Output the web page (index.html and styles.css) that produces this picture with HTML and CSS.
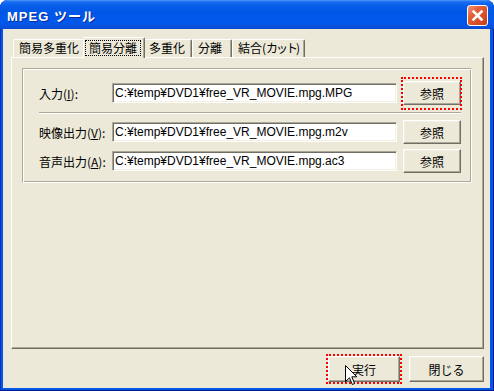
FILE: index.html
```html
<!DOCTYPE html>
<html lang="ja">
<head>
    <meta charset="UTF-8">
    <title>MPEG ツール</title>
    <link rel="stylesheet" href="styles.css">
</head>
<body>
    <div class="window">
        <div class="titlebar">
            <span class="title">MPEG ツール</span>
            <span class="close">
                <svg width="19" height="19" viewBox="0 0 19 19"><path d="M5.5 5.5 L13.5 13.5 M13.5 5.5 L5.5 13.5" stroke="#fff" stroke-width="2.6" stroke-linecap="square"/></svg>
            </span>
        </div>
        <div class="client">
            <div class="tabs">
                <div class="tab t1">簡易多重化</div>
                <div class="tab t2 active"><span class="focus">簡易分離</span></div>
                <div class="tab t3">多重化</div>
                <div class="tab t4">分離</div>
                <div class="tab t5">結合(<span class="narrow">カット</span>)</div>
            </div>
            <div class="panel">
                <div class="group">
                    <div class="row">
                        <label class="lbl">入力(<u>I</u>):</label>
                        <div class="field">C:¥temp¥DVD1¥free_VR_MOVIE.mpg.MPG</div>
                        <button class="btn browse marked mark-browse">参照</button>
                    </div>
                    <div class="sep"></div>
                    <div class="row">
                        <label class="lbl">映像出力(<u>V</u>):</label>
                        <div class="field">C:¥temp¥DVD1¥free_VR_MOVIE.mpg.m2v</div>
                        <button class="btn browse">参照</button>
                    </div>
                    <div class="row row-next">
                        <label class="lbl">音声出力(<u>A</u>):</label>
                        <div class="field">C:¥temp¥DVD1¥free_VR_MOVIE.mpg.ac3</div>
                        <button class="btn browse">参照</button>
                    </div>
                </div>
            </div>
            <div class="actions">
                <button class="btn run marked">実行</button>
                <button class="btn quit">閉じる</button>
            </div>
        </div>
    </div>

    <svg class="cursor" width="13" height="22" viewBox="0 0 13 22">
        <path d="M0.5 0.5 V16.5 L4.5 12.8 L7.3 19.5 L9.6 18.5 L6.8 11.8 H11.8 Z" fill="#fff" stroke="#000" stroke-width="1"/>
    </svg>
</body>
</html>
```

FILE: styles.css
```css
body {
    margin: 0;
    padding: 0;
    font-family: "Noto Sans CJK JP", "Liberation Sans", sans-serif;
    font-size: 12px;
    color: #000;
    background: #fff;
}

.window {
    width: 494px;
    height: 391px;
    display: flex;
    flex-direction: column;
    background: #0456e6;
    border-radius: 8px 8px 0 0;
    overflow: hidden;
    box-shadow: inset 1px 0 #0a2fb8, inset -1px 0 #00198f, inset 0 -1px #00198f;
}

.titlebar {
    height: 29px;
    flex: none;
    box-sizing: border-box;
    display: flex;
    align-items: center;
    justify-content: space-between;
    padding: 2px 6px 0 7px;
    color: #fff;
    background: linear-gradient(#4a96fa 0, #1a6cf2 2px, #0860ea 5px, #0056e6 12px, #0058ec 22px, #0553e0 26px, #0a48cc 29px);
}

.title {
    font-family: "Liberation Sans", "Noto Sans CJK JP", sans-serif;
    font-weight: bold;
    font-size: 13px;
    letter-spacing: 1px;
    text-shadow: 1px 1px #0a2a9a;
}

.close {
    width: 21px;
    height: 21px;
    box-sizing: border-box;
    display: flex;
    align-items: center;
    justify-content: center;
    border: 1px solid #fff;
    border-radius: 3px;
    background: linear-gradient(135deg, #f2947a 0%, #e45e36 35%, #d74d25 70%, #c23d1a 100%);
}

.client {
    flex: 1;
    margin: 0 4px 3px 3px;
    padding: 8px 6px 6px 8px;
    background: #ece9d8;
    display: flex;
    flex-direction: column;
}

/* tabs */
.tabs {
    display: flex;
    height: 20px;
    padding-left: 2px;
    position: relative;
    z-index: 1;
    flex: none;
}

.tab {
    box-sizing: border-box;
    height: 18px;
    margin-top: 2px;
    padding-left: 5px;
    line-height: 16px;
    white-space: nowrap;
    background: #ece9d8;
    border-top: 1px solid #fff;
    border-left: 1px solid #fff;
    border-right: 1px solid #716f64;
    box-shadow: inset -1px 0 #aca899;
    border-radius: 2px 2px 0 0;
}

.t1 { width: 72px; }
.t2 { width: 58px; }
.t3 { width: 49px; }
.t4 { width: 40px; }
.t5 { width: 73px; }

.narrow {
    letter-spacing: -2px;
}

.tab.active {
    width: 62px;
    height: 21px;
    margin: 0 -2px -1px;
    padding: 2px 0 0 2px;
    position: relative;
    z-index: 2;
}

.focus {
    display: inline-block;
    padding: 0 3px;
    line-height: 14px;
    outline: 1px dotted #000;
}

/* panel */
.panel {
    flex: 1;
    border: 1px solid;
    border-color: #fff #716f64 #716f64 #fff;
    box-shadow: inset -1px -1px #aca899;
}

.group {
    margin: 10px 11px 0 10px;
    padding: 12px 10px 9px 16px;
    border: 1px solid;
    border-color: #aca899 #fff #fff #aca899;
    box-shadow: inset 1px 1px #fff, inset -1px -1px #aca899;
}

.row {
    display: flex;
    align-items: center;
    height: 24px;
}

.row-next {
    margin-top: 5px;
}

.lbl {
    width: 73px;
    flex: none;
    white-space: nowrap;
}

.field {
    width: 285px;
    height: 20px;
    box-sizing: border-box;
    padding: 0 2px;
    line-height: 18px;
    font-family: "Liberation Sans", "Noto Sans CJK JP", sans-serif;
    font-size: 12px;
    white-space: nowrap;
    overflow: hidden;
    background: #fff;
    border: 1px solid;
    border-color: #aca899 #fff #fff #aca899;
    box-shadow: inset 1px 1px #716f64, inset -1px -1px #f1efe2;
}

.sep {
    border-top: 1px solid #aca899;
    border-bottom: 1px solid #fff;
    margin: 7px 0 6px;
}

/* buttons */
.btn {
    box-sizing: border-box;
    padding: 0;
    margin: 0;
    position: relative;
    font-family: "Noto Sans CJK JP", sans-serif;
    font-size: 12px;
    color: #000;
    background: #ece9d8;
    border: 1px solid;
    border-color: #fff #716f64 #716f64 #fff;
    box-shadow: inset -1px -1px #aca899, inset 1px 1px #f1efe2;
}

.browse {
    width: 58px;
    height: 24px;
    margin-left: 6px;
    flex: none;
}

.actions {
    flex: none;
    display: flex;
    justify-content: flex-end;
    gap: 9px;
    margin-top: 7px;
    height: 26px;
}

.run {
    width: 72px;
    height: 26px;
}

.quit {
    width: 75px;
    height: 26px;
}

.marked::after {
    content: "";
    position: absolute;
    top: -3px;
    right: -3px;
    bottom: -3px;
    left: -3px;
    border: 2px dotted #f00;
}

.mark-browse::after {
    top: -5px;
    bottom: -6px;
    left: -3px;
    right: -2px;
}

.cursor {
    position: absolute;
    left: 345px;
    top: 365px;
}
```
